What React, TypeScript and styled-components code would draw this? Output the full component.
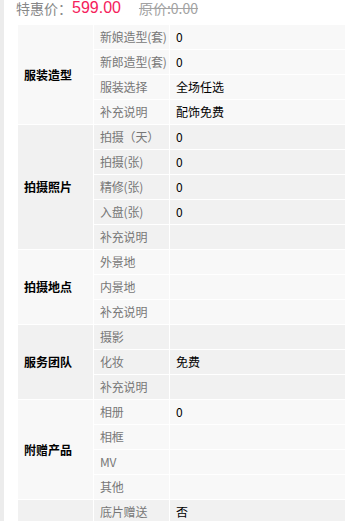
import * as React from 'react';
import styled, { createGlobalStyle } from 'styled-components';

type Item = { label: string; value?: string };
type Group = { title: string; items: Item[] };

const groups: Group[] = [
  {
    title: '服装造型',
    items: [
      { label: '新娘造型(套)', value: '0' },
      { label: '新郎造型(套)', value: '0' },
      { label: '服装选择', value: '全场任选' },
      { label: '补充说明', value: '配饰免费' },
    ],
  },
  {
    title: '拍摄照片',
    items: [
      { label: '拍摄（天）', value: '0' },
      { label: '拍摄(张)', value: '0' },
      { label: '精修(张)', value: '0' },
      { label: '入盘(张)', value: '0' },
      { label: '补充说明' },
    ],
  },
  {
    title: '拍摄地点',
    items: [{ label: '外景地' }, { label: '内景地' }, { label: '补充说明' }],
  },
  {
    title: '服务团队',
    items: [{ label: '摄影' }, { label: '化妆', value: '免费' }, { label: '补充说明' }],
  },
  {
    title: '附赠产品',
    items: [{ label: '相册', value: '0' }, { label: '相框' }, { label: 'MV' }, { label: '其他' }],
  },
  {
    title: '其他服务',
    items: [{ label: '底片赠送', value: '否' }, { label: '补充说明' }, { label: '补充说明' }],
  },
];

const GlobalStyle = createGlobalStyle`
  html, body {
    margin: 0;
    padding: 0;
    background: #fff;
    font-family: "Noto Sans CJK SC", "Liberation Sans", sans-serif;
  }
`;

const Page = styled.div`
  border-left: 4px solid #ececec;
  height: 521px;
  padding: 0 0 0 13px;
  overflow: hidden;
`;

const PriceBar = styled.div`
  display: flex;
  align-items: center;
  height: 15px;
  margin: 0 0 9px -1px;
  white-space: nowrap;
`;

const PriceLabel = styled.span`
  font-size: 14px;
  color: #888;
`;

const PriceValue = styled.span`
  font-family: "Liberation Sans", Arial, sans-serif;
  font-size: 16px;
  color: #f5215c;
  margin-right: 18px;
`;

const OldPrice = styled.span`
  font-size: 14px;
  color: #a3a3a3;
  text-decoration: line-through;
`;

const Table = styled.table`
  width: 100%;
  border-collapse: collapse;
  table-layout: fixed;
  font-size: 12px;
`;

const Row = styled.tr<{ $shade: boolean }>`
  height: 25px;
  background: ${({ $shade }) => ($shade ? '#f1f1f1' : '#f8f8f8')};
`;

const Cell = styled.td`
  padding: 0 6px;
  border: 1px solid #fff;
  line-height: 20px;
  white-space: nowrap;
  overflow: hidden;
`;

const TitleCell = styled(Cell)`
  width: 63px;
  font-weight: bold;
  color: #000;
`;

const LabelCell = styled(Cell)`
  width: 69px;
  padding-right: 0;
  color: #777;
  letter-spacing: -0.2px;
`;

const ValueCell = styled(Cell)`
  color: #000;
`;

export default function App() {
  return (
    <>
      <GlobalStyle />
      <Page>
        <PriceBar>
          <PriceLabel>特惠价：</PriceLabel>
          <PriceValue>599.00</PriceValue>
          <OldPrice>原价:0.00</OldPrice>
        </PriceBar>
        <Table>
          <tbody>
            {groups.map((g, gi) =>
              g.items.map((item, i) => (
                <Row key={`${gi}-${i}`} $shade={gi % 2 === 1}>
                  {i === 0 && <TitleCell rowSpan={g.items.length}>{g.title}</TitleCell>}
                  <LabelCell>{item.label}</LabelCell>
                  <ValueCell>{item.value ?? ''}</ValueCell>
                </Row>
              ))
            )}
          </tbody>
        </Table>
      </Page>
    </>
  );
}
